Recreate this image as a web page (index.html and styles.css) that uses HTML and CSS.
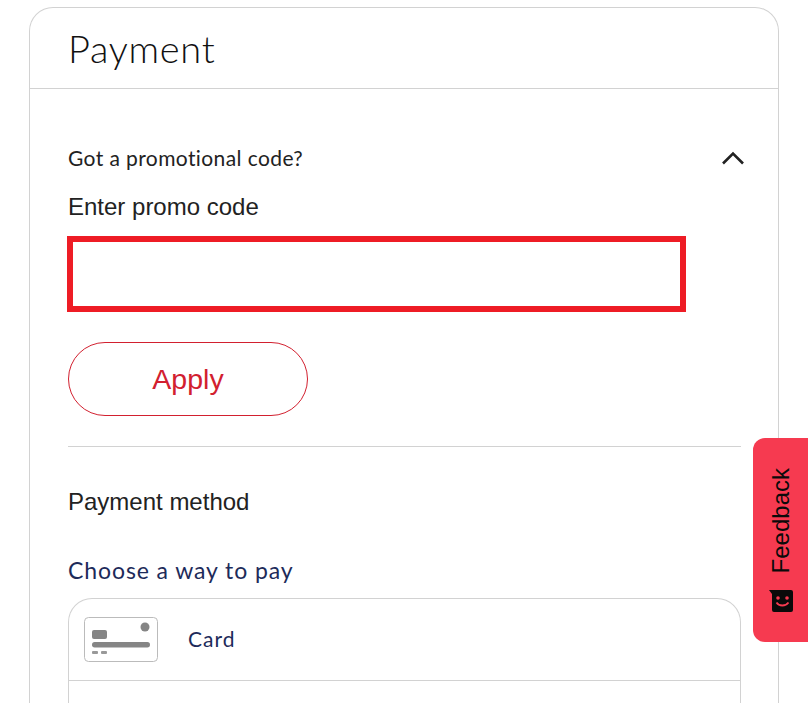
FILE: index.html
```html
<!DOCTYPE html>
<html lang="en">
<head>
<meta charset="utf-8">
<title>Payment</title>
<link rel="stylesheet" href="styles.css">
</head>
<body>
<main class="card">
  <h1 class="card-title">Payment</h1>
  <div class="card-body">
    <div class="promo-toggle">
      <span>Got a promotional code?</span>
      <svg class="chevron" width="24" height="14" viewBox="0 0 24 14"><path d="M2 12.500 12 2.500l10 10" fill="none" stroke="#222" stroke-width="2.600"/></svg>
    </div>
    <label class="field-label" for="promo">Enter promo code</label>
    <input class="promo-input" id="promo" type="text">
    <button class="apply" type="button">Apply</button>
    <hr class="rule">
    <h2 class="method-title">Payment method</h2>
    <p class="choose">Choose a way to pay</p>
    <div class="methods">
      <div class="method">
        <svg class="card-icon" width="74" height="45" viewBox="0 0 74 45">
          <rect x=".5" y=".5" width="73" height="44" rx="4" fill="#fff" stroke="#bbb"/>
          <circle cx="61" cy="10" r="4.500" fill="#858585"/>
          <rect x="8" y="13" width="15" height="9" rx="2" fill="#858585"/>
          <rect x="8" y="25" width="58" height="5.500" rx="2.700" fill="#858585"/>
          <rect x="8" y="34" width="6" height="3" rx="1" fill="#999"/>
          <rect x="17" y="34" width="6" height="3" rx="1" fill="#999"/>
        </svg>
        <span class="method-name">Card</span>
      </div>
      <div class="method"></div>
    </div>
  </div>
</main>
<aside class="feedback">
  <span class="feedback-text">Feedback</span>
  <svg class="feedback-icon" width="24" height="22" viewBox="0 0 24 22">
    <path d="M0 0h22a2 2 0 0 1 2 2v18a2 2 0 0 1-2 2H5a2 2 0 0 1-2-2V4z" fill="#0a0a0a"/>
    <circle cx="9" cy="8" r="1.800" fill="#f63a50"/>
    <circle cx="18" cy="8" r="1.800" fill="#f63a50"/>
    <path d="M7.500 12.500c2.500 4 9 4 12 0" fill="none" stroke="#f63a50" stroke-width="1.800"/>
  </svg>
</aside>
</body>
</html>
```
FILE: styles.css
```css
* { box-sizing: border-box; }
html, body { height: 100%; }
body {
  margin: 0;
  padding: 7px 29px 0;
  overflow: hidden;
  background: #fff;
  color: #222;
  font-family: "Liberation Sans", Arial, sans-serif;
}
.card {
  width: 750px;
  height: 696px;
  overflow: hidden;
  border: 1px solid #d2d2d2;
  border-bottom: 0;
  border-radius: 24px 24px 0 0;
}
.card-title {
  margin: 0;
  height: 81px;
  padding: 16px 38px 0;
  border-bottom: 1px solid #d2d2d2;
  color: #111;
  font: 300 38px/48px Lato, sans-serif;
  letter-spacing: 0.7px;
}
.card-body { padding: 54px 38px 0; }
.promo-toggle {
  display: flex;
  justify-content: space-between;
  align-items: center;
  height: 30px;
  font: 400 21px/30px Lato, sans-serif;
  letter-spacing: 0.4px;
}
.chevron { margin-right: -5px; }
.field-label {
  display: block;
  margin-top: 19px;
  font-size: 24px;
  line-height: 30px;
}
.promo-input {
  display: block;
  width: 619px;
  height: 76px;
  margin: 14px 0 0 -1px;
  border: 6px solid #ee1c25;
  background: #fff;
  outline: 0;
}
.apply {
  display: block;
  width: 240px;
  height: 74px;
  margin-top: 30px;
  padding: 0;
  border: 1px solid #d2202f;
  border-radius: 37px;
  background: #fff;
  color: #d2202f;
  font: 400 28.500px "Liberation Sans", Arial, sans-serif;
}
.rule {
  width: 673px;
  height: 1px;
  margin: 30px 0 0;
  border: 0;
  background: #d2d2d2;
}
.method-title {
  margin: 40px 0 0;
  font-size: 24px;
  font-weight: 400;
  line-height: 30px;
}
.choose {
  margin: 38px 0 0;
  color: #1d2b5a;
  font: 400 23px/30px Lato, sans-serif;
  letter-spacing: 0.9px;
}
.methods {
  width: 673px;
  margin-top: 13px;
  border: 1px solid #d2d2d2;
  border-bottom: 0;
  border-radius: 24px 24px 0 0;
}
.method {
  display: flex;
  align-items: center;
  height: 81px;
  padding: 0 15px 0;
}
.method + .method { border-top: 1px solid #d2d2d2; height: 23px; }
.card-icon { margin-right: 30px; }
.method-name {
  margin-top: -2px;
  color: #1d2b5a;
  font: 400 21px/30px Lato, sans-serif;
  letter-spacing: 1px;
}
.feedback {
  position: fixed;
  top: 438px;
  right: 0;
  display: flex;
  flex-direction: column;
  align-items: center;
  gap: 17px;
  width: 55px;
  height: 204px;
  padding-top: 30px;
  border-radius: 12px 0 0 12px;
  background: #f63a50;
  color: #0a0a0a;
}
.feedback-text {
  writing-mode: vertical-rl;
  transform: rotate(180deg);
  font-size: 24px;
  line-height: 28px;
}
.feedback-icon { flex: none; margin-left: 1px; }
```
